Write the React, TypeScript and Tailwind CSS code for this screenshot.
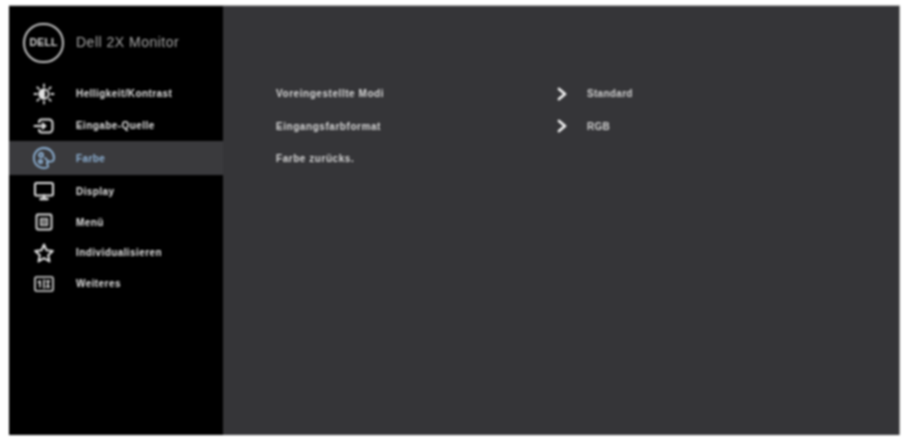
import React from 'react';

const SunIcon = () => (
  <svg width="22" height="22" viewBox="0 0 22 22" fill="none" stroke="currentColor" strokeWidth="1.800" strokeLinecap="round">
    <circle cx="11" cy="11" r="4.600" />
    <path d="M11 6.400a4.600 4.600 0 0 0 0 9.200z" fill="currentColor" />
    <path d="M11 1.500v2.200M11 18.300v2.200M1.500 11h2.200M18.300 11h2.200M4.300 4.300l1.600 1.600M16.100 16.100l1.600 1.600M4.300 17.700l1.600-1.600M16.100 5.900l1.600-1.600" />
  </svg>
);

const InputIcon = () => (
  <svg width="22" height="22" viewBox="0 0 22 22" fill="none" stroke="currentColor" strokeWidth="2" strokeLinecap="round" strokeLinejoin="round">
    <path d="M6 7.200C6 5.500 7 4.500 9 4.500h7a3.500 3.500 0 0 1 3.500 3.500v6a3.500 3.500 0 0 1-3.500 3.500H9c-2 0-3-1-3-2.700" />
    <path d="M1.500 11h11M9.500 8.500L12.500 11l-3 2.500" />
  </svg>
);

const PaletteIcon = () => (
  <svg width="24" height="24" viewBox="0 0 24 24" fill="none" stroke="currentColor" strokeWidth="1.800" strokeLinecap="round">
    <path d="M12 2a10 10 0 1 0 3 19.500c1.600-.6 1-2.400.4-3.400-.8-1.400.2-2.800 1.800-2.600 1.800.2 4.800.4 4.800-3.500A10 10 0 0 0 12 2z" />
    <circle cx="9" cy="9" r="2" />
    <circle cx="8.500" cy="15.500" r="1.600" />
    <path d="M13 12c1.500 1 3.500 3.500 2 6" />
  </svg>
);

const DisplayIcon = () => (
  <svg width="22" height="22" viewBox="0 0 22 22" fill="none" stroke="currentColor" strokeWidth="2" strokeLinecap="round" strokeLinejoin="round">
    <rect x="2" y="3" width="18" height="12.500" rx="1.500" />
    <path d="M11 15.500v3M7.500 19h7" strokeWidth="2.400" />
  </svg>
);

const MenuIcon = () => (
  <svg width="20" height="20" viewBox="0 0 20 20" fill="none" stroke="currentColor" strokeWidth="1.900">
    <rect x="2.500" y="2.500" width="15" height="15" rx="1.500" />
    <rect x="6.500" y="6.500" width="7" height="7" fill="currentColor" fillOpacity="0.5" strokeWidth="1" />
  </svg>
);

const StarIcon = () => (
  <svg width="22" height="22" viewBox="0 0 22 22" fill="none" stroke="currentColor" strokeWidth="2" strokeLinejoin="round">
    <path d="M11 2.500l2.600 5.800 6.200.7-4.600 4.200 1.300 6.200-5.500-3.200-5.500 3.200 1.300-6.200L2.200 9l6.200-.7z" />
  </svg>
);

const OthersIcon = () => (
  <svg width="22" height="22" viewBox="0 0 22 22" fill="none" stroke="currentColor" strokeWidth="1.600" strokeLinecap="round">
    <rect x="2" y="4" width="18" height="14" rx="1.500" />
    <path d="M7 8v6M5.500 9.200L7 8M11 7v8M15 8v6M13.500 14h3M13.500 8h3" />
  </svg>
);

const menuItems = [
  { label: 'Helligkeit/Kontrast', icon: <SunIcon />, height: 'h-[33px]' },
  { label: 'Eingabe-Quelle', icon: <InputIcon />, height: 'h-[31px]' },
  { label: 'Farbe', icon: <PaletteIcon />, height: 'h-[34px]', active: true },
  { label: 'Display', icon: <DisplayIcon />, height: 'h-[32px]' },
  { label: 'Menü', icon: <MenuIcon />, height: 'h-[30px]' },
  { label: 'Individualisieren', icon: <StarIcon />, height: 'h-[31px]' },
  { label: 'Weiteres', icon: <OthersIcon />, height: 'h-[31px]' },
];

const settings = [
  { label: 'Voreingestellte Modi', value: 'Standard', height: 'h-[33px]' },
  { label: 'Eingangsfarbformat', value: 'RGB', height: 'h-[32px]' },
  { label: 'Farbe zurücks.', height: 'h-[33px]' },
];

export default function App() {
  return (
    <div className="w-[904px] h-[439px] bg-white pt-[5px] pl-[9px] pr-[4px] pb-[4px] overflow-hidden font-['Liberation_Sans',sans-serif] blur-[0.8px]">
      <div className="flex h-full border-t border-[#b9b9b9]">
        {/* Sidebar */}
        <div className="w-[214px] shrink-0 bg-black">
          <div className="flex h-[71px] items-center pl-[14px] pt-[2px]">
            <div className="flex h-[40px] w-[41px] items-center justify-center rounded-full border-2 border-[#c4c4c4] text-[10.500px] font-bold tracking-[0.2px] text-[#d4d4d4]">
              DELL
            </div>
            <span className="ml-[12px] text-[14px] tracking-[0.500px] text-[#a8a8a8]">Dell 2X Monitor</span>
          </div>
          {menuItems.map(item => (
            <div
              key={item.label}
              className={`flex items-center ${item.height} ${item.active ? 'bg-[#3a3a3d] text-[#8fb4d8]' : 'text-[#e0e0e0]'}`}
            >
              <div className="flex w-[67px] justify-center pl-[2px]">{item.icon}</div>
              <span className="text-[10px] font-bold tracking-[0.420px]">{item.label}</span>
            </div>
          ))}
        </div>

        {/* Content */}
        <div className="flex-1 bg-[#353538] border-r border-[#8a8a8a] pl-[53px] pt-[71px]">
          {settings.map(row => (
            <div key={row.label} className={`flex items-center ${row.height}`}>
              <span className="w-[280px] text-[10px] font-bold tracking-[0.550px] text-[#d8d8d8]">{row.label}</span>
              {row.value && (
                <>
                  <svg width="12" height="14" viewBox="0 0 12 14" fill="none" stroke="#f0f0f0" strokeWidth="2.800" strokeLinecap="round" strokeLinejoin="round">
                    <path d="M3 2l6 5-6 5" />
                  </svg>
                  <span className="ml-[19px] text-[10px] font-bold tracking-[0.300px] text-[#d0d0d0]">{row.value}</span>
                </>
              )}
            </div>
          ))}
        </div>
      </div>
    </div>
  );
}
